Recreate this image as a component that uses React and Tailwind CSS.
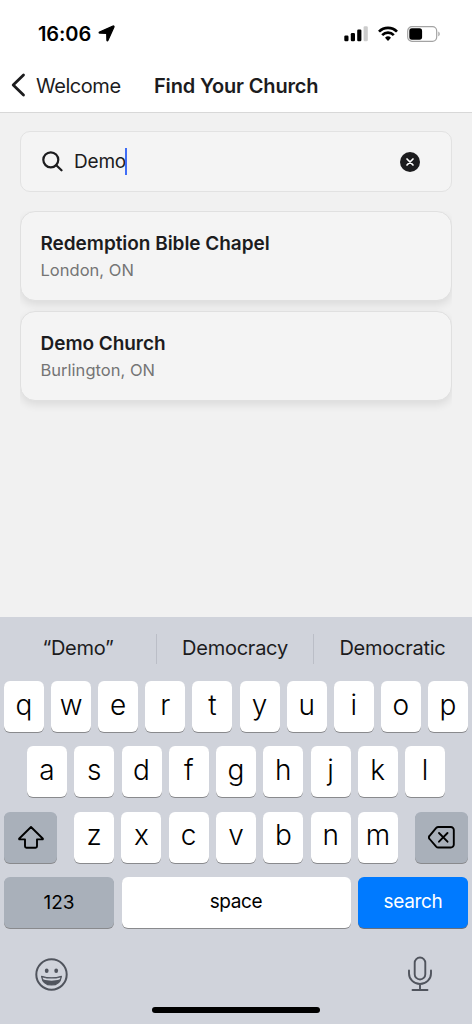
import { useState } from "react";

const churches = [
  { name: "Redemption Bible Chapel", city: "London, ON" },
  { name: "Demo Church", city: "Burlington, ON" },
];

function StatusBar() {
  return (
    <div className="flex h-[58px] items-center justify-between pt-[9px] pr-[32px] pl-[38px]">
      <div className="flex items-center gap-[5px]">
        <span className="w-[55px] text-[20px] leading-6 font-semibold tracking-[-0.1px] text-black">16:06</span>
        <svg width="17" height="17" viewBox="0 0 17 17">
          <path
            d="M15 1 1.500 7.100c-.6.3-.5 1 .2 1l6.700.2c.2 0 .3.100.3.300l.2 6.700c0 .7.700.8 1 .2L16 2c.3-.7-.3-1.300-1-1z"
            fill="black"
            stroke="black"
            strokeWidth="1.200"
            strokeLinejoin="round"
          />
        </svg>
      </div>

      <div className="flex items-center">
        <svg width="24" height="16" viewBox="0 0 24 16">
          <rect x="0.300" y="9.500" width="4.200" height="5.800" rx="1.200" />
          <rect x="6.800" y="7" width="4.200" height="8.300" rx="1.200" />
          <rect x="13.200" y="3.600" width="4.200" height="11.700" rx="1.200" />
          <rect x="19.600" y="0.300" width="4.200" height="15" rx="1.200" fill="#cccccc" />
        </svg>
        <svg className="ml-[10px]" width="20" height="16" viewBox="0 0 20 16" fill="none" stroke="black" strokeWidth="2.700">
          <path d="M1 5.600a12.700 12.700 0 0 1 18 0" />
          <path d="M4.200 9.100a8.200 8.200 0 0 1 11.600 0" />
          <path d="M7 11.700a4.400 4.400 0 0 1 6 0L10 14.900z" fill="black" stroke="none" />
        </svg>
        <svg className="ml-[9px] -mr-px" width="34" height="16" viewBox="0 0 34 16">
          <rect x="0.700" y="0.700" width="29" height="14.600" rx="4.300" fill="none" stroke="#a3a3a3" strokeWidth="1.200" />
          <rect x="2.300" y="2.300" width="12.800" height="11.400" rx="2.600" />
          <path d="M31.300 5.500v4.800c1.900-.8 1.900-4 0-4.800z" fill="#a3a3a3" />
        </svg>
      </div>
    </div>
  );
}

function NavBar() {
  return (
    <div className="flex h-[55px] items-center border-b border-[#d8d8d8] pl-[11px] text-[#1c1c1e]">
      <svg width="15" height="24" viewBox="0 0 15 24" fill="none" stroke="currentColor" strokeWidth="2.800" strokeLinecap="round" strokeLinejoin="round">
        <path d="M12.500 2 2.200 12l10.300 10" />
      </svg>
      <span className="ml-[10px] w-[118px] pt-px text-[20px] tracking-[-0.45px]">Welcome</span>
      <h1 className="pt-px text-[20px] font-semibold tracking-[-0.17px]">Find Your Church</h1>
    </div>
  );
}

function ChurchCard({ church }) {
  return (
    <div className="flex h-[90px] flex-col rounded-[15px] border border-[#e0e0e0] bg-[#f4f4f4] pt-[20px] pl-[19.500px] shadow-[0_4px_9px_rgba(0,0,0,0.09)]">
      <span className="text-[19px] leading-6 font-semibold tracking-[-0.04px] text-[#1c1c1e]">{church.name}</span>
      <span className="mt-[2px] text-[16.500px] leading-6 tracking-[0.020px] text-[#757575]">{church.city}</span>
    </div>
  );
}

function Key({ children }) {
  return (
    <button className="h-[51px] w-[40px] shrink-0 rounded-[6px] bg-white pb-[4px] text-[28px] leading-none font-light text-black shadow-[0_1px_0_#898a8d]">
      {children}
    </button>
  );
}

function Keyboard() {
  return (
    <div className="h-[407px] bg-[#d0d3db]">
      {/* Suggestions */}
      <div className="flex h-[64px] items-center text-[20px] tracking-[-0.25px] text-[#1c1c1e]">
        <span className="w-[156px] pb-[2px] text-center">“Demo”</span>
        <span className="mb-px h-[30px] w-px bg-[#bbbec7]" />
        <span className="w-[156px] pb-[2px] text-center">Democracy</span>
        <span className="mb-px h-[30px] w-px bg-[#bbbec7]" />
        <span className="w-[157px] pb-[2px] text-center">Democratic</span>
      </div>

      <div className="flex flex-col gap-[14.400px] px-[4px]">
        <div className="flex justify-between">
          {"qwertyuiop".split("").map((k) => (
            <Key key={k}>{k}</Key>
          ))}
        </div>

        <div className="flex justify-between px-[23px]">
          {"asdfghjkl".split("").map((k) => (
            <Key key={k}>{k}</Key>
          ))}
        </div>

        <div className="flex justify-between">
          <button className="flex h-[51px] w-[53px] items-center justify-center rounded-[6px] bg-[#a9b0ba] shadow-[0_1px_0_#898a8d]">
            <svg width="26" height="23" viewBox="0 0 26 23" fill="none" stroke="black" strokeWidth="1.900" strokeLinejoin="round">
              <path d="M13 1 1.300 12.500c-.4.4-.2.900.4.900H7v6.900c0 .9.500 1.400 1.400 1.400h9.200c.9 0 1.400-.5 1.400-1.400v-6.900h5.300c.6 0 .8-.5.4-.9z" />
            </svg>
          </button>
          <div className="flex w-[324px] justify-between">
            {"zxcvbnm".split("").map((k) => (
              <Key key={k}>{k}</Key>
            ))}
          </div>
          <button className="flex h-[51px] w-[53px] items-center justify-center rounded-[6px] bg-[#a9b0ba] shadow-[0_1px_0_#898a8d]">
            <svg width="27" height="23" viewBox="0 0 27 23" fill="none" stroke="black" strokeWidth="1.900" strokeLinecap="round" strokeLinejoin="round">
              <path d="M10.300 1h12.500a3 3 0 0 1 3 3v14.500a3 3 0 0 1-3 3H10.300a3 3 0 0 1-2.100-.9L1.600 13a2.200 2.200 0 0 1 0-3.200l6.600-7.900a3 3 0 0 1 2.100-.9z" />
              <path d="m11 7 8.500 8.700M19.500 7 11 15.700" />
            </svg>
          </button>
        </div>

        <div className="flex justify-between text-[19px]">
          <button className="h-[51px] w-[110px] rounded-[6px] bg-[#a9b0ba] pt-px text-black shadow-[0_1px_0_#898a8d]">123</button>
          <button className="h-[51px] w-[229px] rounded-[6px] bg-white pb-px tracking-[-0.35px] text-black shadow-[0_1px_0_#898a8d]">space</button>
          <button className="h-[51px] w-[110px] rounded-[6px] bg-[#007aff] pb-px tracking-[-0.35px] text-white shadow-[0_1px_0_#68707d]">search</button>
        </div>
      </div>

      <div className="mt-[28px] flex justify-between pr-[39px] pl-[35px]">
        <svg className="mt-[2px]" width="33" height="33" viewBox="0 0 33 33" fill="none" stroke="#50545d">
          <circle cx="16.500" cy="16.500" r="15.200" strokeWidth="2" />
          <ellipse cx="11.700" cy="12.800" rx="1.900" ry="2.300" fill="#50545d" stroke="none" />
          <ellipse cx="21.200" cy="12.800" rx="1.900" ry="2.300" fill="#50545d" stroke="none" />
          <path d="M6.600 18.300c.8 5.600 4.800 8.700 9.900 8.700s9.100-3.100 9.900-8.700c-6 2-13.800 2-19.800 0z" fill="#50545d" strokeWidth="1.200" strokeLinejoin="round" />
          <path d="M7.600 19.400c5.400 1.600 12.400 1.600 17.800 0-.2.900-.5 1.600-.9 2.200-4.700 1.500-11.300 1.500-16 0-.4-.6-.7-1.300-.9-2.200z" fill="#d0d3db" stroke="none" />
        </svg>
        <svg width="26" height="36" viewBox="0 0 26 36" fill="none" stroke="#50545d" strokeWidth="1.900" strokeLinecap="round">
          <rect x="7.700" y="1.500" width="10.600" height="22" rx="5.300" />
          <path d="M2 14.500v3a11 10.500 0 0 0 22 0v-3M13 28v6M5.500 34h15" />
        </svg>
      </div>

      <div className="mx-auto mt-[15px] h-[6px] w-[168px] rounded-full bg-black" />
    </div>
  );
}

export default function App() {
  const [query, setQuery] = useState("Demo");

  return (
    <div className="flex h-[1024px] w-[472px] flex-col overflow-hidden bg-[#f1f1f1] font-['Inter',sans-serif]">
      <header className="bg-white">
        <StatusBar />
        <NavBar />
      </header>

      <main className="flex-1 px-[20px] pt-[18px]">
        {/* Search */}
        <div className="flex h-[61px] items-center rounded-[10px] border border-[#e2e2e2] bg-[#f4f4f4] pr-[31px] pl-[21px] text-[#1c1c1e]">
          <svg width="21" height="21" viewBox="0 0 21 21" fill="none" stroke="currentColor" strokeWidth="2.200" strokeLinecap="round">
            <circle cx="8.800" cy="8.800" r="7.500" />
            <path d="m14.300 14.300 5.200 5" />
          </svg>
          <span className="ml-[11px] w-[51px] pt-[2px] text-[19px] tracking-[-0.2px] whitespace-nowrap">{query}</span>
          <span className="h-[27px] w-[2px] bg-[#3f6df6]" />
          <button className="ml-auto" onClick={() => setQuery("")}>
            <svg width="20" height="20" viewBox="0 0 20 20">
              <circle cx="10" cy="10" r="10" fill="#1c1c1e" />
              <path d="m7 7 6 6M13 7l-6 6" stroke="white" strokeWidth="1.700" strokeLinecap="round" />
            </svg>
          </button>
        </div>

        {/* Results */}
        <div className="mt-[19px] flex flex-col gap-[10px] overflow-hidden pb-[20px]">
          {churches.map((church) => (
            <ChurchCard key={church.name} church={church} />
          ))}
        </div>
      </main>

      <Keyboard />
    </div>
  );
}
